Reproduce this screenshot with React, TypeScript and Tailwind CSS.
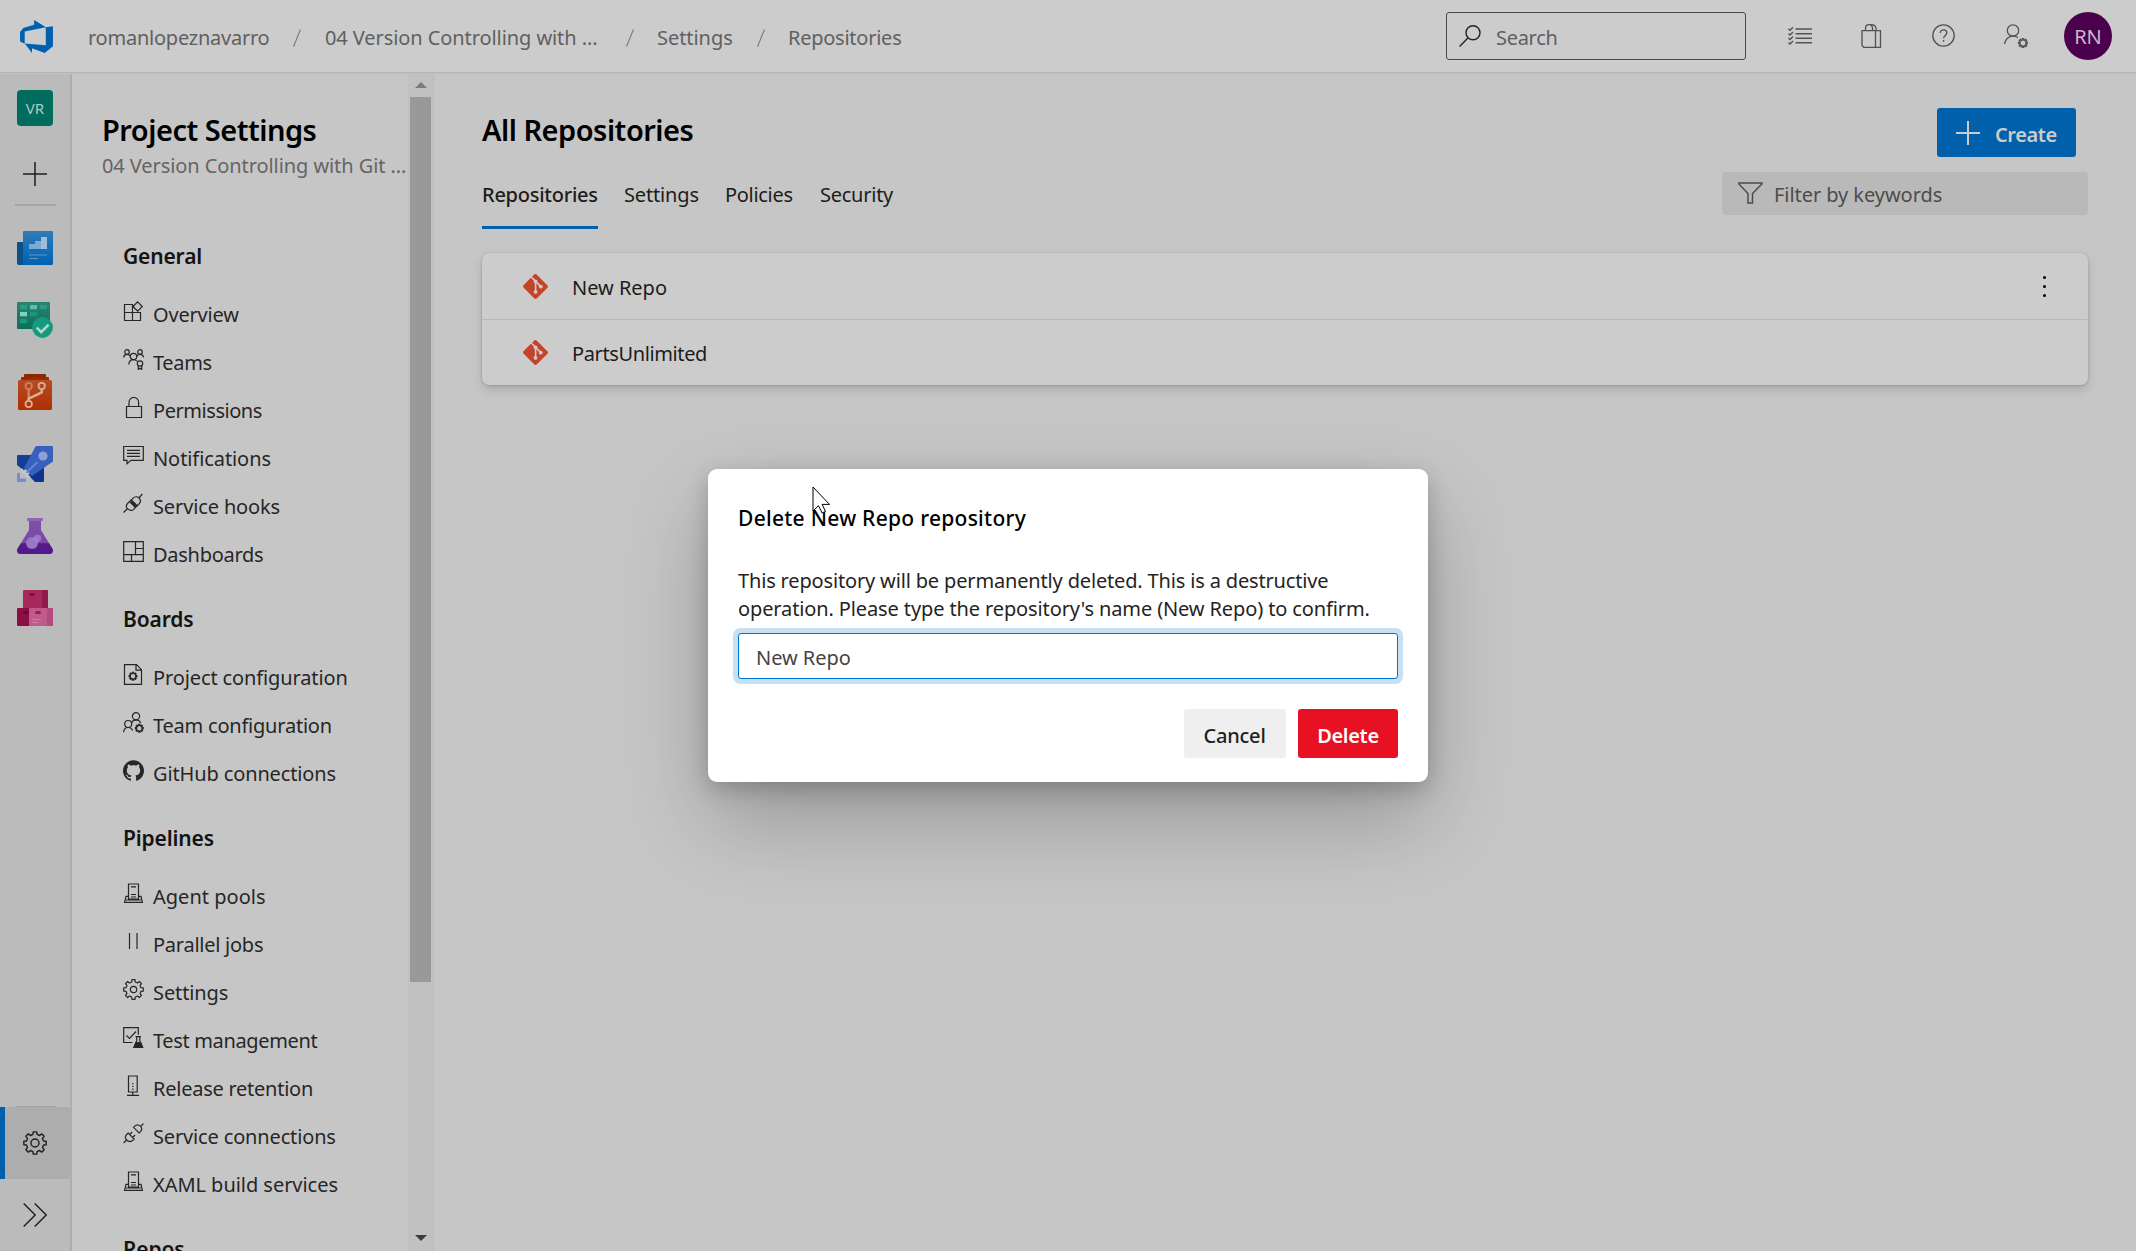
import type { ReactNode } from "react";
import { SiGit, SiGithub } from "react-icons/si";

/* ---------- icon helpers ---------- */

function gearPath(cx: number, cy: number, outer: number, inner: number, teeth: number) {
  const pts: string[] = [];
  const step = (Math.PI * 2) / teeth;
  for (let i = 0; i < teeth; i++) {
    const a = i * step - Math.PI / 2;
    const spots: [number, number][] = [
      [a - step * 0.3, inner],
      [a - step * 0.2, outer],
      [a + step * 0.2, outer],
      [a + step * 0.3, inner],
    ];
    for (const [ang, r] of spots) {
      pts.push(`${(cx + Math.cos(ang) * r).toFixed(2)},${(cy + Math.sin(ang) * r).toFixed(2)}`);
    }
  }
  return `M${pts.join("L")}Z`;
}

function Line21({ children }: { children: ReactNode }) {
  return (
    <svg viewBox="0 0 21 21" className="size-[21px] shrink-0" fill="none" stroke="currentColor" strokeWidth="1.2">
      {children}
    </svg>
  );
}

const ServerIcon = () => (
  <Line21>
    <path d="M5.500 16V1h10v15zM8 3.800h5M8 11.500h5M8 14h5M5.500 13.300H3L1.600 19.400h17.800L18 13.300h-2.500M3 17h15" />
  </Line21>
);

const icons: Record<string, ReactNode> = {
  overview: (
    <Line21>
      <path d="M1.500 3.500H9.500V19.500H1.500zM1.500 11.500H17.500V19.500H9.500M14.700.8l4.600 4.700-4.600 4.700-4.700-4.700z" />
    </Line21>
  ),
  teams: (
    <Line21>
      <circle cx="4" cy="3" r="2.300" />
      <circle cx="17" cy="3" r="2.300" />
      <circle cx="10.500" cy="7.500" r="3.200" />
      <circle cx="17" cy="14.500" r="2.700" />
      <path d="M.6 8.500C.8 6.500 2.200 5.400 4 5.400c1.500 0 2.500.7 3.200 1.700M20.500 8.500c-.2-2-1.700-3.100-3.500-3.100-1.500 0-2.500.7-3.200 1.700M5.800 15.500c.2-3 2.200-4.800 4.700-4.800 1.500 0 2.700.6 3.500 1.500M15.300 16.800v3.600l1.700-1.200 1.700 1.200v-3.600" />
    </Line21>
  ),
  permissions: (
    <Line21>
      <path d="M3.500 9.500h15v11h-15zM6 9.500V5.300a4.800 4.800 0 0 1 9.600 0v4.200" />
    </Line21>
  ),
  notifications: (
    <Line21>
      <path d="M.7 1.500h19.600v13.800H8l-4 3.500v-3.500H.7zM4 5.300h13M4 8.300h13M4 11.300h13" />
    </Line21>
  ),
  hooks: (
    <Line21>
      <path d="M.6 19.500l4-4M16 5l3.300-4M4.400 15.700c-2-2-1-4.200.6-5.700l1.600-1.500 5.800 6-1.500 1.600c-2 2-4.500 1.700-6.500-.4zM8.300 6.900l1.800-1.700c1.700-1.800 4.200-2 6-.2 1.700 1.800 1.700 4.100 0 5.900l-1.800 1.900zM6.500 8.400l1.900-1.700M12.300 14.500l2-1.800M8 8.500l5 5" />
    </Line21>
  ),
  dashboards: (
    <Line21>
      <path d="M.7.7h19.600v19.600H.7zM12.500.7v13M12.500 7.500h7.800M.7 13.700h19.600M8.500 13.700v6.600" />
    </Line21>
  ),
  projectConfig: (
    <Line21>
      <path d="M1.500.7h12l5 5v14.600h-17zM13 .7v5.500h5.500" />
      <path d={gearPath(10, 12.2, 3.9, 2.7, 8)} strokeWidth="1.200" />
    </Line21>
  ),
  teamConfig: (
    <Line21>
      <circle cx="13" cy="4.300" r="3.600" />
      <circle cx="5.200" cy="12" r="3.500" />
      <path d="M.6 20.300c.2-3 2-4.800 4.600-4.800 2.200 0 3.800 1.200 4.400 3.200M8.500 11c.7-2 2.300-3.100 4.500-3.100 2.300 0 4 1.300 4.600 3.300" />
      <path d={gearPath(16.3, 16.3, 3.9, 2.7, 8)} strokeWidth="1.200" />
    </Line21>
  ),
  github: <SiGithub className="size-[21px] shrink-0" />,
  server: <ServerIcon />,
  parallel: (
    <Line21>
      <path d="M6.500 2v16M14 2v16" />
    </Line21>
  ),
  settings: (
    <Line21>
      <path d={gearPath(10.5, 10.5, 9.9, 7.7, 8)} strokeLinejoin="round" />
      <circle cx="10.500" cy="10.500" r="3.200" />
    </Line21>
  ),
  test: (
    <Line21>
      <path d="M9.500 15.500H.7V.7h14.600v7M3.500 8.500l3 3L13 4.500" />
      <path d="M12.500 9.700h5.500M13.700 9.700v4L11 20.300h8.500l-2.700-6.600v-4" />
      <path d="M12.900 15.500h4.800l1.900 4.800h-8.700z" fill="currentColor" />
    </Line21>
  ),
  retention: (
    <Line21>
      <path d="M5.500 1h8.700v16H5.500zM9.800 17v3M4 20.300h12" />
      <path d="M9.800 8v7" strokeDasharray="1.300 1.500" />
    </Line21>
  ),
  connections: (
    <Line21>
      <path d="M.6 20l3-3M17.300 3.700L20.500.6M3.600 17c-2-2-1.300-4.200.6-6l1-1 6 6-1 1c-2 1.900-4.600 1.900-6.600 0zM10.500 4.300l1.200-1.200c1.700-1.600 4-1.600 5.700 0 1.600 1.700 1.500 4-.1 5.700l-1.200 1.200zM6.700 11.500l2.500-2.500M9.600 14.500l2.500-2.500" />
    </Line21>
  ),
};

/* ---------- top bar ---------- */

function Logo() {
  return (
    <svg viewBox="0 0 18 18" className="size-[37px]" fill="#0060b0">
      <path d="M17 4v9.740l-4 3.280-6.200-2.260V17l-3.510-4.590 10.230.8V4.440zm-3.410.49L7.850 1v2.290L2.580 4.840 1 6.870v4.610l2.260 1V6.570z" />
    </svg>
  );
}

function Slash({ className }: { className: string }) {
  return (
    <svg viewBox="0 0 8 18" className={`mt-1 h-[18px] w-2 ${className}`} stroke="#808080" strokeWidth="1.200">
      <path d="M.6 17.500L7.400.5" />
    </svg>
  );
}

function Header() {
  return (
    <header className="relative z-10 flex h-[72px] shrink-0 items-center bg-[#cccccc] text-[20px] text-[#606060] shadow-[0_1px_0_#b6b6b6,0_2px_1px_#c0c0c0]">
      <div className="ml-[18px] w-[70px]">
        <Logo />
      </div>
      <nav className="flex items-center leading-[70px]">
        <span className="w-[182px] pt-1 tracking-[-0.24px]">romanlopeznavarro</span>
        <Slash className="ml-[23px]" />
        <span className="ml-6 w-[276px] pt-1 tracking-[-0.08px] whitespace-nowrap">04 Version Controlling with ...</span>
        <Slash className="ml-[25px]" />
        <span className="ml-[23px] w-[77px] pt-1 tracking-[-0.05px]">Settings</span>
        <Slash className="ml-[23px]" />
        <span className="ml-[23px] pt-1 tracking-[-0.25px]">Repositories</span>
      </nav>
      <div className="ml-auto flex h-12 w-[300px] items-center rounded-[3px] border border-[#484848]">
        <svg viewBox="0 0 22 22" className="ml-3 size-[22px]" fill="none" stroke="#222" strokeWidth="1.400">
          <circle cx="14" cy="7.800" r="7" />
          <path d="M8.900 12.900L.6 21.400" />
        </svg>
        <span className="ml-[15px] pt-1 tracking-[-0.3px]">Search</span>
      </div>
      <div className="ml-[42px] flex items-center gap-12 text-[#525252]">
        <svg viewBox="0 0 24 24" className="size-6" fill="none" stroke="currentColor" strokeWidth="1.400">
          <path d="M7.500 5H24M7.500 9.700H24M7.500 14.200H24M7.500 18.700H24" />
          <path d="M.5 4.800l1.500 1.500L5 3.300M.5 9.500L2 11l3-3M.5 14L2 15.500l3-3M.5 18.500L2 20l3-3" />
        </svg>
        <svg viewBox="0 0 24 24" className="size-6" fill="none" stroke="currentColor" strokeWidth="1.300">
          <path d="M2 6.600h18.500V23.300H3.800L2 21.500zM15.500 6.600v16.700M20.500 6.600v16.700M5.500 6.600V4.500C5.500 2 7 .7 9 .7s3.500 1.300 3.500 3.800v2.100M10 1C12.500.2 16 1 16 4.500v2.100" />
        </svg>
        <svg viewBox="0 0 24 24" className="size-6" fill="none" stroke="currentColor" strokeWidth="1.300">
          <circle cx="11.500" cy="11.500" r="10.700" />
          <path d="M8.300 9c0-2 1.300-3.200 3.300-3.200s3.200 1.200 3.200 2.900c0 2.600-3.200 2.800-3.200 5.500M11.600 16v1.800" />
        </svg>
        <svg viewBox="0 0 24 24" className="size-6" fill="none" stroke="currentColor" strokeWidth="1.300">
          <circle cx="9" cy="6.500" r="5.700" />
          <path d="M.6 20C.8 15.500 4.500 12.200 9 12.200c2 0 3.500.5 4.900 1.500" />
          <path d={gearPath(19, 19, 4.5, 3, 8)} />
        </svg>
      </div>
      <div className="mr-6 ml-9 flex size-12 items-center justify-center rounded-full bg-[#4a004c] pt-px text-[20px] text-[#c9b6ca]">
        RN
      </div>
    </header>
  );
}

/* ---------- left rail ---------- */

function Rail() {
  return (
    <aside className="flex w-[72px] shrink-0 flex-col items-center border-r-2 border-[#adadad] bg-[#bbbbbb] pt-[18px] text-[#1e1e1e]">
      <div className="flex size-9 shrink-0 items-center justify-center rounded bg-[#006c5d] text-[15px] text-[#a9cbc6]">VR</div>
      <svg viewBox="0 0 24 24" className="mt-9 size-6 shrink-0" stroke="currentColor" strokeWidth="1.500">
        <path d="M12 0v24M0 12h24" />
      </svg>
      <div className="mt-[18px] h-0.5 w-[41px] shrink-0 bg-[#a5a5a5]" />

      <svg viewBox="0 0 36 36" className="mt-[25px] size-9 shrink-0">
        <defs>
          <linearGradient id="ov" x1="0" y1="0" x2="0" y2="1">
            <stop offset="0" stopColor="#2f7cb8" />
            <stop offset="1" stopColor="#0062b2" />
          </linearGradient>
        </defs>
        <path d="M1 11h7v23H2a2 2 0 0 1-2-2V12a1 1 0 0 1 1-1z" fill="#0d508c" />
        <path d="M7 0h28a1 1 0 0 1 1 1v31.500a1.500 1.500 0 0 1-1.500 1.500H4c1.500 0 2-1 2-2V1a1 1 0 0 1 1-1z" fill="url(#ov)" />
        <path d="M12 13h6v-3h6V6h6v12H12z" fill="#7cabd1" />
        <path d="M24 6h6v12h-6z" fill="#9bbfdc" />
        <path d="M12 24h18M12 27.500h9" stroke="#5c97c8" />
      </svg>

      <svg viewBox="0 0 36 36" className="mt-[35px] size-9 shrink-0">
        <defs>
          <linearGradient id="bd" x1="0" y1="0" x2="0" y2="1">
            <stop offset="0" stopColor="#2b8472" />
            <stop offset="1" stopColor="#0c6f5b" />
          </linearGradient>
        </defs>
        <rect width="33" height="27" rx="1" fill="url(#bd)" />
        <path d="M3 3h7v4.300H3zM23 3h7v4.300h-7z" fill="#2c9b86" />
        <path d="M13 3h7v4.300h-7z" fill="#5ebca8" />
        <path d="M3 10h7v4.300H3z" fill="#84cfc0" />
        <path d="M13 10h7v4.300h-7zM3 17h7v4.300H3z" fill="#1b967f" />
        <circle cx="25.500" cy="25.500" r="10.400" fill="#159a80" />
        <path d="M19.800 25.700l4.400 4.400 7.400-7.400" fill="none" stroke="#add9d0" strokeWidth="2.600" />
      </svg>

      <svg viewBox="0 0 36 36" className="mt-9 size-9 shrink-0">
        <defs>
          <linearGradient id="rp" x1="0" y1="0" x2="0" y2="1">
            <stop offset="0" stopColor="#b84a25" />
            <stop offset="1" stopColor="#ad3000" />
          </linearGradient>
        </defs>
        <path d="M8 0h20a1 1 0 0 1 1 1v5H7V1a1 1 0 0 1 1-1z" fill="#8a2900" />
        <path d="M5 3h26a1 1 0 0 1 1 1v3H4V4a1 1 0 0 1 1-1z" fill="#962d00" />
        <rect x="1" y="6" width="34" height="30" rx="1.500" fill="url(#rp)" />
        <g fill="none" stroke="#dcab97" strokeWidth="1.800">
          <circle cx="11.700" cy="12" r="3.200" stroke="#cc7f62" />
          <path d="M11.700 15.200v11.600" stroke="#cc7f62" strokeWidth="2.500" />
          <circle cx="24.700" cy="12" r="3.200" />
          <circle cx="11.700" cy="30" r="3.200" />
          <path d="M24.700 15.200v3.300l-13 6v2.300" strokeWidth="2.500" />
        </g>
      </svg>

      <svg viewBox="0 0 36 36" className="mt-9 size-9 shrink-0">
        <path d="M1 9h15L7 25l-7-6V10a1 1 0 0 1 1-1z" fill="#143f96" />
        <path d="M27 19v16a1 1 0 0 1-1 1h-8l-7-7z" fill="#0d3490" />
        <path d="M20 0h15a1 1 0 0 1 1 1v14.500L15 30l-8-8L18 1.500C18.500.5 19 0 20 0z" fill="#3860bd" />
        <circle cx="26" cy="10" r="4.600" fill="#8ea2d8" />
        <path d="M20.500 16L9 27" stroke="#6a86d2" strokeWidth="1.800" />
        <path d="M0 27h3v5.500h6V36H0z" fill="#768fcb" />
        <path d="M4 23l9 9M5 28l4-4" stroke="#c0c4d4" strokeWidth="2.400" />
      </svg>

      <svg viewBox="0 0 36 36" className="mt-9 size-9 shrink-0">
        <defs>
          <linearGradient id="tp" x1="0" y1="0" x2="0" y2="1">
            <stop offset="0" stopColor="#7d51a3" />
            <stop offset="1" stopColor="#7a45ad" />
          </linearGradient>
        </defs>
        <path d="M12 2h12v10l11.300 18.500c1.700 3-.3 5.500-3 5.500H3.700c-2.700 0-4.700-2.500-3-5.500L12 12z" fill="url(#tp)" />
        <path d="M4 25.300h28l3.300 5.200c1.700 3-.3 5.500-3 5.500H3.700c-2.700 0-4.700-2.500-3-5.500z" fill="#521a8b" />
        <rect x="10" width="16" height="3" rx="1" fill="#8e66b4" />
        <circle cx="15" cy="25" r="6" fill="#9a77c2" />
        <circle cx="20.500" cy="20.300" r="3.600" fill="#ab8bcd" fillOpacity=".7" />
      </svg>

      <svg viewBox="0 0 36 36" className="mt-9 size-9 shrink-0">
        <rect x="6" width="25" height="19" rx="1" fill="#a8285e" />
        <rect x="25" width="6" height="19" fill="#8f1a4b" />
        <rect y="18" width="13" height="18" rx="1" fill="#8b0f45" />
        <rect x="12" y="18" width="24" height="18" rx="1" fill="#c15a8a" />
        <rect x="30" y="18" width="6" height="18" rx="1" fill="#b34a7b" />
        <rect x="12" y="3" width="6" height="3" rx="1.500" fill="#7c1142" />
        <rect x="6" y="21" width="6" height="3" rx="1.500" fill="#6a0a34" />
        <rect x="18" y="21" width="6" height="3" rx="1.500" fill="#97204f" />
        <path d="M15 29.500h9M15 32.500h6" stroke="#cf7fa5" />
      </svg>

      <div className="mt-auto h-px w-[41px] shrink-0 bg-[#a5a5a5]" />
      <div className="flex h-[72px] w-full shrink-0 items-center justify-center rounded-r-[3px] border-l-[5px] border-[#0060ab] bg-[#adadad] pr-[5px]">
        <svg viewBox="0 0 24 24" className="size-6" fill="none" stroke="currentColor" strokeWidth="1.400">
          <path d={gearPath(12, 12, 11.3, 8.8, 8)} strokeLinejoin="round" />
          <circle cx="12" cy="12" r="4" />
        </svg>
      </div>
      <div className="flex h-[72px] shrink-0 items-center">
        <svg viewBox="0 0 24 24" className="size-6" fill="none" stroke="currentColor" strokeWidth="1.400">
          <path d="M.7.5L12.200 12 .7 23.500M11.700.5L23.200 12 11.700 23.500" />
        </svg>
      </div>
    </aside>
  );
}

/* ---------- settings navigation ---------- */

type Item = { label: string; icon: string; ls: string };

const sections: { title: string; items: Item[] }[] = [
  {
    title: "General",
    items: [
      { label: "Overview", icon: "overview", ls: "tracking-[-0.18px]" },
      { label: "Teams", icon: "teams", ls: "tracking-[-0.35px]" },
      { label: "Permissions", icon: "permissions", ls: "tracking-[-0.45px]" },
      { label: "Notifications", icon: "notifications", ls: "tracking-[-0.08px]" },
      { label: "Service hooks", icon: "hooks", ls: "tracking-[-0.13px]" },
      { label: "Dashboards", icon: "dashboards", ls: "tracking-[-0.28px]" },
    ],
  },
  {
    title: "Boards",
    items: [
      { label: "Project configuration", icon: "projectConfig", ls: "tracking-[-0.12px]" },
      { label: "Team configuration", icon: "teamConfig", ls: "tracking-[-0.22px]" },
      { label: "GitHub connections", icon: "github", ls: "tracking-[-0.13px]" },
    ],
  },
  {
    title: "Pipelines",
    items: [
      { label: "Agent pools", icon: "server", ls: "tracking-[0.02px]" },
      { label: "Parallel jobs", icon: "parallel", ls: "tracking-[-0.25px]" },
      { label: "Settings", icon: "settings", ls: "tracking-[-0.1px]" },
      { label: "Test management", icon: "test", ls: "tracking-[-0.35px]" },
      { label: "Release retention", icon: "retention", ls: "tracking-[-0.25px]" },
      { label: "Service connections", icon: "connections", ls: "tracking-[-0.15px]" },
      { label: "XAML build services", icon: "server", ls: "tracking-[-0.04px]" },
    ],
  },
  { title: "Repos", items: [] },
];

function SettingsNav() {
  return (
    <aside className="flex w-[362px] shrink-0 border-r border-[#b9b9b9]">
      <div className="min-w-0 flex-1 overflow-hidden">
        <h1 className="ml-[30px] pt-10 text-[29px] leading-9 font-semibold tracking-[-0.5px] whitespace-nowrap text-black">Project Settings</h1>
        <p className="ml-[30px] pt-[3px] text-[20px] leading-[30px] tracking-[-0.08px] whitespace-nowrap text-[#646464]">
          04 Version Controlling with Git ...
        </p>
        <div className="pt-[33px]">
          {sections.map((s) => (
            <section key={s.title}>
              <h2 className="ml-[51px] pt-6 pb-[15px] text-[21px] leading-9 font-semibold tracking-[-0.15px] text-[#141414]">{s.title}</h2>
              {s.items.map((it) => (
                <div key={it.label} className="ml-[51px] flex h-12 gap-[9px] text-[20px] leading-[46px] text-[#262626]">
                  <div className="pt-3">{icons[it.icon]}</div>
                  <span className={`pt-[3px] whitespace-nowrap ${it.ls}`}>{it.label}</span>
                </div>
              ))}
            </section>
          ))}
        </div>
      </div>
      <div className="flex w-[25px] shrink-0 flex-col items-center bg-[#c1c1c1] pt-2.5 pb-2.5">
        <svg viewBox="0 0 12 6" className="h-1.5 w-3 shrink-0" fill="#7c7c7c">
          <path d="M6 0l6 6H0z" />
        </svg>
        <div className="mt-[9px] h-[885px] w-[21px] shrink-0 bg-[#999999]" />
        <svg viewBox="0 0 12 6" className="mt-auto h-1.5 w-3 shrink-0" fill="#3c3c3c">
          <path d="M6 6L0 0h12z" />
        </svg>
      </div>
    </aside>
  );
}

/* ---------- main content ---------- */

function RepoRow({ name, ls, more }: { name: string; ls: string; more?: boolean }) {
  return (
    <div className="flex h-[66px] items-center pr-[42px] pl-[41px]">
      <SiGit className="size-[25px] text-[#c4432b]" />
      <span className={`ml-6 pt-1 text-[20px] text-[#1c1c1c] ${ls}`}>{name}</span>
      {more && (
        <div className="ml-auto flex flex-col gap-1.5">
          <i className="size-[3px] rounded-full bg-black" />
          <i className="size-[3px] rounded-full bg-black" />
          <i className="size-[3px] rounded-full bg-black" />
        </div>
      )}
    </div>
  );
}

function Main() {
  return (
    <main className="min-w-0 flex-1 pr-12 pl-12">
      <div className="flex items-start justify-between pt-9">
        <h1 className="pt-1 text-[29px] leading-9 font-semibold tracking-[-0.5px] text-black">All Repositories</h1>
        <button className="mr-3 flex h-[49px] w-[139px] items-center rounded-[3px] bg-[#0060ab] pl-[19px] text-[#cccccc]">
          <svg viewBox="0 0 24 24" className="size-6 shrink-0" stroke="currentColor" strokeWidth="2">
            <path d="M12 0v24M0 12h24" />
          </svg>
          <span className="ml-[15px] pt-1 text-[20px] font-semibold tracking-[-0.4px]">Create</span>
        </button>
      </div>
      <div className="flex items-start justify-between pt-[15px]">
        <div className="flex h-[57px] gap-[26px] text-[20px] leading-[46px] text-[#1c1c1c]">
          <span className="h-full w-[116px] border-b-[3px] border-[#0060ab] font-[550] tracking-[-0.25px] whitespace-nowrap">Repositories</span>
          <span className="w-[75px] tracking-[-0.15px]">Settings</span>
          <span className="w-[69px] tracking-[-0.3px]">Policies</span>
          <span className="tracking-[-0.25px]">Security</span>
        </div>
        <div className="flex h-[43px] w-[366px] items-center rounded bg-[#b9b9b9] pl-4 text-[#4c4c4c]">
          <svg viewBox="0 0 25 22" className="mb-0.5 h-[22px] w-[25px]" fill="none" stroke="currentColor" strokeWidth="1.500">
            <path d="M.9 1h23v1l-9.400 9.500v9.600H10v-9.600L.9 2z" />
          </svg>
          <span className="ml-[11px] pt-[3px] text-[20px] tracking-[-0.06px]">Filter by keywords</span>
        </div>
      </div>
      <div className="mt-6 rounded-[7px] bg-[#cccccc] shadow-[0_0_2px_rgba(0,0,0,0.08),0_5px_11px_rgba(0,0,0,0.13),0_1px_3px_rgba(0,0,0,0.12)]">
        <RepoRow name="New Repo" ls="tracking-[-0.02px]" more />
        <div className="mr-px -mb-px h-px bg-[#b9b9b9]" />
        <RepoRow name="PartsUnlimited" ls="tracking-[-0.38px]" />
      </div>
    </main>
  );
}

/* ---------- dialog ---------- */

function DeleteDialog() {
  return (
    <div className="absolute inset-0 z-20 flex items-center justify-center">
      <div className="relative h-[313px] w-[720px] rounded-[9px] bg-white px-[30px] pt-7 shadow-[0_38px_86px_rgba(0,0,0,0.24),0_7px_22px_rgba(0,0,0,0.2)]">
        <h2 className="text-[21px] leading-[42px] font-[550] tracking-[0.28px] text-black">Delete New Repo repository</h2>
        <p className="pt-7 text-[20px] leading-7 whitespace-nowrap text-[#242424]">
          <span className="block tracking-[-0.16px]">This repository will be permanently deleted. This is a destructive</span>
          <span className="block tracking-[-0.12px]">operation. Please type the repository&apos;s name (New Repo) to confirm.</span>
        </p>
        <div className="mt-2.5 flex h-[46px] items-center rounded-[3px] border border-[#0078d4] bg-white pt-1 pl-[17px] text-[20px] tracking-[-0.04px] text-[#444444] ring-[5px] ring-[#c7e0f4]">
          New Repo
        </div>
        <div className="mt-[30px] flex justify-end gap-3 text-[20px]">
          <button className="h-[49px] w-[102px] rounded-[3px] bg-[#efefef] pt-1 pr-px font-[550] tracking-[-0.2px] text-[#1e1e1e]">Cancel</button>
          <button className="h-[49px] w-[100px] rounded-[3px] bg-[#e81123] pt-1 font-semibold tracking-[-0.3px] text-white">Delete</button>
        </div>
        <svg viewBox="0 0 19 28" className="absolute top-[17px] left-[104px] h-7 w-[19px]">
          <path d="M1 1v24l5.500-5.300 3.600 7.300 3.400-1.600-3.400-7h7.400z" fill="#fff" stroke="#000" />
        </svg>
      </div>
    </div>
  );
}

export default function App() {
  return (
    <div className="relative flex h-[1251px] w-[2136px] flex-col overflow-hidden bg-[#c6c6c6] font-['Noto_Sans',sans-serif]">
      <Header />
      <div className="flex min-h-0 flex-1">
        <Rail />
        <SettingsNav />
        <Main />
      </div>
      <DeleteDialog />
    </div>
  );
}
